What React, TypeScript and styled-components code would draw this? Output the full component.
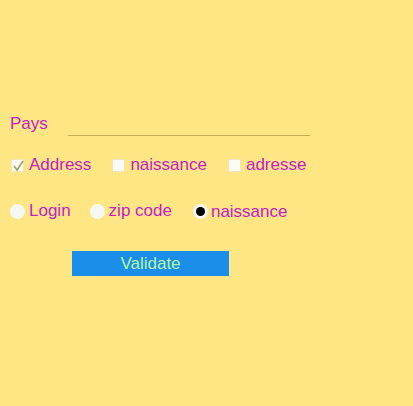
import styled, { createGlobalStyle } from "styled-components";

const GlobalStyle = createGlobalStyle`
  html, body {
    margin: 0;
    padding: 0;
    background: #ffe685;
  }
  body {
    font-family: "Liberation Sans", Arial, sans-serif;
  }
`;

const Page = styled.div`
  width: 413px;
  height: 406px;
  background: #ffe685;
  padding: 114px 0 0 10px;
  box-sizing: border-box;
  color: #c21ec4;
  font-size: 17px;
`;

const FieldRow = styled.div`
  display: flex;
  align-items: flex-start;
  height: 24px;
`;

const Label = styled.span`
  width: 58px;
  line-height: 20px;
`;

const Line = styled.div`
  width: 242px;
  height: 21px;
  border-bottom: 1px solid #c9ac52;
`;

const OptionRow = styled.div<{ $top: number }>`
  display: flex;
  align-items: center;
  margin-top: ${(p) => p.$top}px;
  height: 20px;
`;

const Option = styled.label<{ $gap: number }>`
  display: flex;
  align-items: center;
  margin-right: ${(p) => p.$gap}px;
  line-height: 20px;
`;

const Box = styled.span`
  width: 13px;
  height: 13px;
  background: #fbfbf5;
  border: 1px solid #efe6bf;
  box-sizing: border-box;
  margin: 0 5px 0 1px;
  position: relative;
  display: inline-block;
  svg {
    position: absolute;
    left: 0;
    top: -1px;
  }
`;

const Radio = styled.span<{ $on?: boolean; $gap?: number }>`
  width: 15px;
  height: 15px;
  border-radius: 50%;
  background: #f6f7f2;
  box-sizing: border-box;
  margin-right: ${(p) => p.$gap ?? 4}px;
  display: inline-flex;
  align-items: center;
  justify-content: center;
  &::after {
    content: "";
    display: ${(p) => (p.$on ? "block" : "none")};
    width: 9px;
    height: 9px;
    border-radius: 50%;
    background: #000;
  }
`;

const Text = styled.span<{ $drop?: number }>`
  position: relative;
  top: ${(p) => p.$drop ?? 0}px;
`;

const Button = styled.button`
  margin: 30px 0 0 62px;
  width: 157px;
  height: 25px;
  border: none;
  background: #1a8ee8;
  color: #b4f5a2;
  font-family: "Liberation Sans", Arial, sans-serif;
  font-size: 17px;
  padding: 0;
  display: block;
`;

export default function App() {
  return (
    <>
      <GlobalStyle />
      <Page>
        <FieldRow>
          <Label>Pays</Label>
          <Line />
        </FieldRow>
        <OptionRow $top={17}>
          <Option $gap={20}>
            <Box>
              <svg width="13" height="13" viewBox="0 0 13 13">
                <path d="M2 7 L5 11 L11 2" fill="none" stroke="#a8a060" strokeWidth="1.6" />
              </svg>
            </Box>
            <Text>Address</Text>
          </Option>
          <Option $gap={20}>
            <Box />
            <Text>naissance</Text>
          </Option>
          <Option $gap={0}>
            <Box />
            <Text>adresse</Text>
          </Option>
        </OptionRow>
        <OptionRow $top={26}>
          <Option $gap={19}>
            <Radio />
            <Text>Login</Text>
          </Option>
          <Option $gap={21}>
            <Radio />
            <Text>zip code</Text>
          </Option>
          <Option $gap={0}>
            <Radio $on $gap={3} />
            <Text $drop={1}>naissance</Text>
          </Option>
        </OptionRow>
        <Button>Validate</Button>
      </Page>
    </>
  );
}
